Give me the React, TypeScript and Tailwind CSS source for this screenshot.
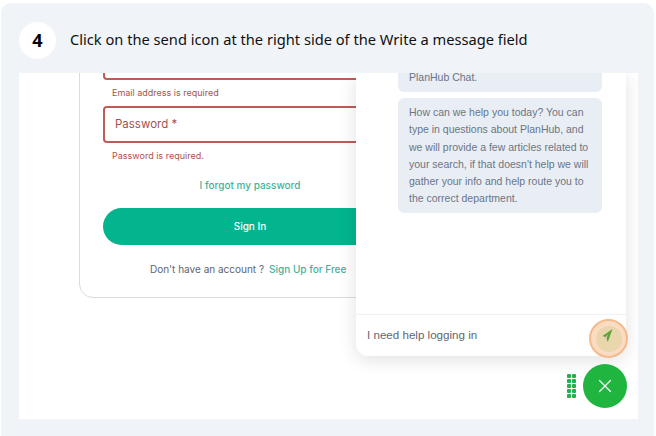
import React from "react";
import { X } from "lucide-react";

const sans = "font-['Inter',sans-serif]";

function LoginForm() {
  return (
    <div className={`${sans} ml-[60px] mt-[-40px] w-[420px] h-[265px] rounded-[14px] border border-[#d9dbdf] bg-white px-[23px] pt-[6px]`}>
      <div className="h-[40px] w-full rounded-[4px] border-2 border-[#bd5c55]" />
      <p className="mt-[6px] h-[20px] pl-[9px] text-[9px] leading-[13px] text-[#a9534e]">Email address is required</p>
      <div className="flex h-[37px] w-full items-center rounded-[4px] border-2 border-[#bd5c55] px-[10px] text-[11.5px] text-[#a3524d]">
        Password *
      </div>
      <p className="mt-[6px] pl-[9px] text-[9px] leading-[13px] text-[#a9534e]">Password is required.</p>
      <p className="mt-[16px] w-[294px] text-center text-[10px] font-medium leading-[14px] text-[#3fb39b]">I forgot my password</p>
      <div className="mt-[16px] flex h-[37px] w-full items-center rounded-full bg-[#02b58f]">
        <span className="w-[294px] text-center text-[10px] font-medium text-white">Sign In</span>
      </div>
      <p className="mt-[17px] flex gap-[5px] whitespace-nowrap pl-[47px] text-[10px] leading-[14px] text-[#60656f]">
        <span>Don't have an account ?</span>
        <span className="font-medium text-[#3fb39b]">Sign Up for Free</span>
      </p>
    </div>
  );
}

function ChatPanel() {
  return (
    <div className="absolute left-[337px] top-0 flex h-[283px] w-[270px] flex-col rounded-b-[12px] bg-white font-['Liberation_Sans',sans-serif] shadow-[0_4px_18px_rgba(0,0,0,0.12)]">
      <div className="flex flex-1 flex-col gap-[6px] pl-[42px] pr-[24px]">
        <div className="flex h-[19px] items-start rounded-b-[6px] bg-[#e9eef5] px-[11px] text-[10.5px] leading-[9px] text-[#6a7585]">
          PlanHub Chat.
        </div>
        <div className="rounded-[6px] bg-[#e9eef5] px-[11px] pb-[5px] pt-[6px] text-[10.5px] leading-[17.3px] text-[#6a7585]">
          How can we help you today? You can type in questions about PlanHub, and we will provide a few articles related to your search, if that doesn't help we will gather your info and help route you to the correct department.
        </div>
      </div>
      <div className="flex h-[42px] items-center border-t border-[#eef1f5] pb-[1px] pl-[11px] text-[11.6px] text-[#5f6670]">
        I need help logging in
      </div>
    </div>
  );
}

function SendHighlight() {
  return (
    <div className="absolute left-[570px] top-[246px] flex h-[39px] w-[39px] items-center justify-center rounded-full border-2 border-[#f6b98a] bg-[#fbdcc2]">
      <div className="flex h-[26px] w-[26px] items-center justify-center rounded-full bg-[#e9d6ad]">
        <svg width="14" height="14" viewBox="0 0 14 14" className="overflow-visible">
          <path d="M10.5 -3 L0.5 4 L3.5 5.3 L6 2 L4.5 6.5 L5.8 10 Z" fill="#5fa33e" />
        </svg>
      </div>
    </div>
  );
}

function ChatToggle() {
  return (
    <div className="absolute left-[548px] top-[291px] flex items-center gap-[7px]">
      <div className="grid grid-cols-2 gap-x-[1px] gap-y-[1px]">
        {Array.from({ length: 10 }).map((_, i) => (
          <span key={i} className="h-[4px] w-[4px] rounded-[1px] bg-[#22b14c]" />
        ))}
      </div>
      <div className="flex h-[44px] w-[44px] items-center justify-center rounded-full bg-[#1fb53f]">
        <X className="h-[22px] w-[22px] text-white" strokeWidth={1.3} />
      </div>
    </div>
  );
}

export default function App() {
  return (
    <div className="h-[436px] w-[656px] overflow-hidden bg-white pl-[1px] pr-[2px] pt-[3px]">
      <div className="h-[433px] rounded-t-[10px] bg-[#f0f4f9] px-[18px] font-['Noto_Sans',sans-serif]">
        <div className="flex h-[70px] items-center gap-[14px] pt-[4px]">
          <div className="flex h-[37px] w-[37px] items-center justify-center rounded-full bg-white text-[18px] font-bold text-black">4</div>
          <p className="text-[14.65px] text-[#111]">Click on the send icon at the right side of the Write a message field</p>
        </div>
        <div className="relative h-[346px] w-[619px] overflow-hidden bg-white">
          <LoginForm />
          <ChatPanel />
          <SendHighlight />
          <ChatToggle />
        </div>
      </div>
    </div>
  );
}
